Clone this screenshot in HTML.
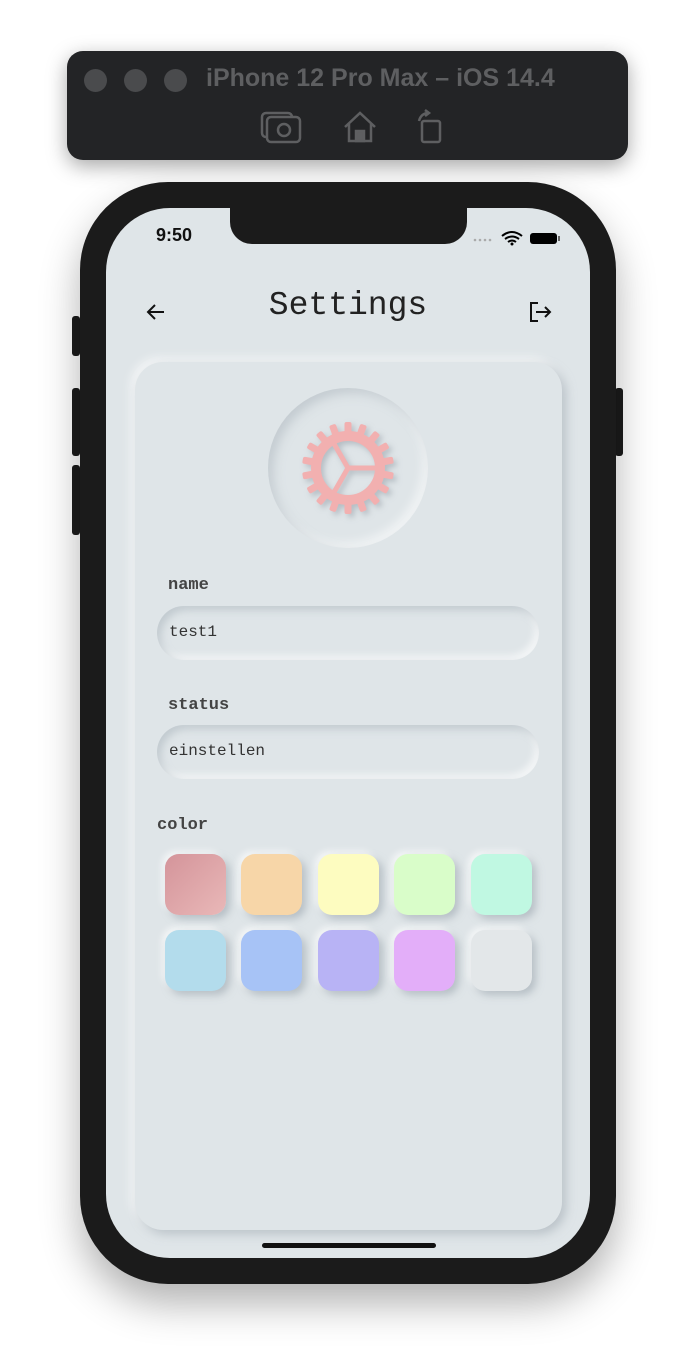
<!DOCTYPE html>
<html><head><style>
body{margin:0;width:696px;height:1370px;background:#fff;position:relative;overflow:hidden;font-family:"Liberation Sans",sans-serif}
.bar{position:absolute;left:67px;top:51px;width:561px;height:109px;background:#232426;border-radius:16px;box-shadow:0 6px 20px rgba(0,0,0,.35)}
.dot{position:absolute;top:18px;width:23px;height:23px;border-radius:50%;background:#4a4b4d}
.bt{position:absolute;left:139px;top:13px;color:#5e5f61;font-weight:bold;font-size:25px}
.phone{position:absolute;left:80px;top:182px;width:536px;height:1102px;background:#1b1b1b;border-radius:88px;box-shadow:0 20px 40px rgba(0,0,0,.3)}
.btn{position:absolute;background:#1b1b1b;width:8px;border-radius:3px}
.screen{position:absolute;left:106px;top:208px;width:484px;height:1050px;background:#dfe5e8;border-radius:64px;overflow:hidden}
.notch{position:absolute;left:124px;top:-2px;width:237px;height:38px;background:#1b1b1b;border-radius:0 0 22px 22px}
.mono{font-family:"Liberation Mono",monospace}
.card{position:absolute;left:29px;top:154px;width:427px;height:868px;border-radius:28px;background:#dfe5e8;box-shadow:4px 4px 10px rgba(160,170,178,.6),-4px -4px 10px rgba(255,255,255,.7)}
.inp{position:absolute;left:22px;width:382px;height:54px;border-radius:27px;box-shadow:inset 4px 4px 8px rgba(170,180,188,.55),inset -4px -4px 8px rgba(255,255,255,.7)}
.inp span{position:absolute;left:12px;top:17px;font-size:16px;color:#333}
.lbl{position:absolute;font-weight:bold;font-size:17px;color:#444}
.sw{position:absolute;width:61px;height:61px;border-radius:14px;box-shadow:4px 4px 8px rgba(150,160,170,.55),-3px -3px 7px rgba(255,255,255,.7)}
</style></head><body>
<div class="bar"><div class="dot" style="left:17px"></div><div class="dot" style="left:57px"></div><div class="dot" style="left:97px"></div><div class="bt">iPhone 12 Pro Max – iOS 14.4</div>
<svg style="position:absolute;left:190px;top:56px" width="200" height="40" fill="none" stroke="#5e5f61" stroke-width="2.5">
<rect x="5" y="6" width="30" height="24" rx="4"/><rect x="10" y="10" width="33" height="25" rx="4" fill="#232426"/><circle cx="27" cy="23" r="6"/>
<path d="M88 20 L103 6 L118 20 M92 17 V34 H114 V17"/><rect x="99" y="24" width="8" height="10" fill="#5e5f61"/>
<path d="M162 14 q2-8 10-8 M168 3 l4 3 -4 3"/><rect x="165" y="14" width="18" height="21" rx="2"/>
</svg></div>
<div class="btn" style="left:72px;top:316px;height:40px"></div>
<div class="btn" style="left:72px;top:388px;height:68px"></div>
<div class="btn" style="left:72px;top:465px;height:70px"></div>
<div class="btn" style="left:615px;top:388px;height:68px"></div>
<div class="phone"></div>
<div class="screen">
<div class="notch"></div>
<div style="position:absolute;left:50px;top:17px;font-size:18px;font-weight:bold;color:#111">9:50</div>
<svg style="position:absolute;left:366px;top:22px" width="90" height="16"><g fill="#aaa"><circle cx="3" cy="10" r="1.3"/><circle cx="8" cy="10" r="1.3"/><circle cx="13" cy="10" r="1.3"/><circle cx="18" cy="10" r="1.3"/></g>
<path d="M30 6 q10-8 20 0 M33 9 q7-5 14 0 M36 12 q4-3 8 0" stroke="#000" stroke-width="2" fill="none"/><circle cx="40" cy="14" r="1.5"/>
<rect x="58" y="3" width="27" height="11" rx="3" fill="#000"/><rect x="86" y="6" width="2" height="5" fill="#666"/></svg>
<svg style="position:absolute;left:38px;top:92px" width="24" height="24" fill="none" stroke="#111" stroke-width="2"><path d="M20 12 H4 M11 5 L4 12 L11 19"/></svg>
<div class="mono" style="position:absolute;left:0;width:484px;text-align:center;top:79px;font-size:33px;color:#222">Settings</div>
<svg style="position:absolute;left:422px;top:92px" width="26" height="24" fill="none" stroke="#111" stroke-width="2"><path d="M10 3 H3 V21 H10 M8 12 H22 M17 7 L22 12 L17 17"/></svg>
<div class="card">
<div style="position:absolute;left:133px;top:26px;width:160px;height:160px;border-radius:50%;box-shadow:inset 5px 5px 10px rgba(170,180,188,.5),inset -5px -5px 10px rgba(255,255,255,.6)"></div>
<svg style="position:absolute;left:163px;top:56px;filter:drop-shadow(3px 3px 3px rgba(140,150,160,.5))" width="100" height="100" viewBox="-50 -50 100 100">
<g fill="#f2b0b0"><g id="t"><rect x="-3.5" y="-46" width="7" height="12" rx="2"/></g>
<use href="#t" transform="rotate(20)"/><use href="#t" transform="rotate(40)"/><use href="#t" transform="rotate(60)"/><use href="#t" transform="rotate(80)"/><use href="#t" transform="rotate(100)"/><use href="#t" transform="rotate(120)"/><use href="#t" transform="rotate(140)"/><use href="#t" transform="rotate(160)"/><use href="#t" transform="rotate(180)"/><use href="#t" transform="rotate(200)"/><use href="#t" transform="rotate(220)"/><use href="#t" transform="rotate(240)"/><use href="#t" transform="rotate(260)"/><use href="#t" transform="rotate(280)"/><use href="#t" transform="rotate(300)"/><use href="#t" transform="rotate(320)"/><use href="#t" transform="rotate(340)"/></g>
<circle r="32" fill="none" stroke="#f2b0b0" stroke-width="10"/>
<g stroke="#f2b0b0" stroke-width="5"><path d="M0 0 L32 0 M0 0 L-16 27.7 M0 0 L-16 -27.7"/></g>
</svg>
<div class="lbl mono" style="left:33px;top:214px">name</div>
<div class="inp" style="top:244px"><span class="mono">test1</span></div>
<div class="lbl mono" style="left:33px;top:334px">status</div>
<div class="inp" style="top:363px"><span class="mono">einstellen</span></div>
<div class="lbl mono" style="left:22px;top:454px">color</div>
<div class="sw" style="left:30px;top:492px;background:linear-gradient(135deg,#d4949a,#e9b8b8)"></div>
<div class="sw" style="left:106px;top:492px;background:#f7d6a8"></div>
<div class="sw" style="left:183px;top:492px;background:#fdfcc0"></div>
<div class="sw" style="left:259px;top:492px;background:#d9fdc9"></div>
<div class="sw" style="left:336px;top:492px;background:#c0f8e2"></div>
<div class="sw" style="left:30px;top:568px;background:#b3dcec"></div>
<div class="sw" style="left:106px;top:568px;background:#a7c3f6"></div>
<div class="sw" style="left:183px;top:568px;background:#b8b3f5"></div>
<div class="sw" style="left:259px;top:568px;background:#e3aef9"></div>
<div class="sw" style="left:336px;top:568px;background:#e3e7e9"></div>
</div>
<div style="position:absolute;left:156px;top:1035px;width:174px;height:5px;border-radius:3px;background:#111"></div>
</div>
</body></html>
